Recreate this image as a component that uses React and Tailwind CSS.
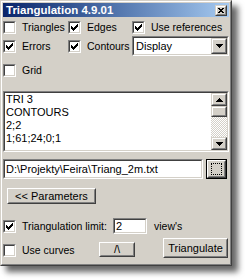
import React from "react";

const sunkO = "border border-t-[#808080] border-l-[#808080] border-b-white border-r-white";
const sunkI = "border border-t-[#404040] border-l-[#404040] border-b-[#d4d0c8] border-r-[#d4d0c8]";
const raisO = "border border-t-white border-l-white border-b-[#404040] border-r-[#404040]";
const raisI = "border border-t-[#d4d0c8] border-l-[#d4d0c8] border-b-[#808080] border-r-[#808080]";
const frameO = "border border-t-[#d4d0c8] border-l-[#d4d0c8] border-b-[#404040] border-r-[#404040]";
const frameI = "border border-t-white border-l-white border-b-[#808080] border-r-[#808080]";

function CheckMark() {
  const rects = [
    [6, 0, 1], [5, 1, 2], [0, 2, 1], [4, 2, 3], [0, 3, 2], [3, 3, 3], [0, 4, 5], [1, 5, 3], [2, 6, 1],
  ];
  return (
    <svg width="7" height="7" viewBox="0 0 7 7" shapeRendering="crispEdges">
      {rects.map(([x, y, w], i) => (
        <rect key={i} x={x} y={y} width={w} height="1" fill="#000" />
      ))}
    </svg>
  );
}

function Check({ checked }) {
  return (
    <div className={`w-[13px] h-[13px] shrink-0 ${sunkO}`}>
      <div className={`w-full h-full bg-white flex items-center justify-center ${sunkI}`}>
        {checked && <CheckMark />}
      </div>
    </div>
  );
}

function CheckLabel({ checked, label, className = "" }) {
  return (
    <div className={`flex items-center ${className}`}>
      <Check checked={checked} />
      <span className="ml-[6px] whitespace-nowrap text-[10.5px]">{label}</span>
    </div>
  );
}

function Tri({ up }) {
  return (
    <svg width="7" height="4" viewBox="0 0 7 4" shapeRendering="crispEdges">
      {up ? (
        <>
          <rect x="3" y="0" width="1" height="1" fill="#000" />
          <rect x="2" y="1" width="3" height="1" fill="#000" />
          <rect x="1" y="2" width="5" height="1" fill="#000" />
          <rect x="0" y="3" width="7" height="1" fill="#000" />
        </>
      ) : (
        <>
          <rect x="0" y="0" width="7" height="1" fill="#000" />
          <rect x="1" y="1" width="5" height="1" fill="#000" />
          <rect x="2" y="2" width="3" height="1" fill="#000" />
          <rect x="3" y="3" width="1" height="1" fill="#000" />
        </>
      )}
    </svg>
  );
}

function ArrowBtn({ up, className = "" }) {
  return (
    <div className={`${frameO} ${className}`}>
      <div className={`w-full h-full bg-[#d4d0c8] flex items-center justify-center ${frameI}`}>
        <Tri up={up} />
      </div>
    </div>
  );
}

function Button({ children, className = "" }) {
  return (
    <div className={`${raisO} ${className}`}>
      <div className={`w-full h-full bg-[#d4d0c8] flex items-center justify-center ${raisI}`}>
        {children}
      </div>
    </div>
  );
}

export default function App() {
  return (
    <div className="w-[245px] h-[280px] bg-white font-['Liberation_Sans',Arial,sans-serif] text-[11px] leading-[13px] text-black">
      <div className={`w-[232px] h-[266px] bg-[#d4d0c8] shadow-[6px_6px_6px_rgba(0,0,0,0.6)] ${frameO}`}>
        <div className={`w-full h-full p-[1px] flex flex-col ${frameI}`}>
          {/* title bar */}
          <div className="h-[14px] shrink-0 flex items-center justify-between bg-linear-to-r from-[#0a246a] to-[#a6caf0] pl-[3px] pr-[2px]">
            <span className="text-white font-bold text-[11.5px] leading-[14px] whitespace-nowrap">Triangulation 4.9.01</span>
            <div className={`w-[12px] h-[11px] ${frameO}`}>
              <div className={`w-full h-full bg-[#d4d0c8] flex items-center justify-center ${frameI}`}>
                <svg width="6" height="5" viewBox="0 0 6 5" shapeRendering="crispEdges">
                  <path d="M0 0h2v1h2v-1h2v1h-1v1h-1v1h1v1h1v1h-2v-1h-2v1h-2v-1h1v-1h1v-1h-1v-1h-1z" fill="#000" />
                </svg>
              </div>
            </div>
          </div>

          {/* row 1 */}
          <div className="flex h-[13px] mt-[4px]">
            <CheckLabel className="w-[65px]" checked={false} label="Triangles" />
            <CheckLabel className="w-[64px]" checked label="Edges" />
            <CheckLabel checked label="Use references" />
          </div>

          {/* row 2 */}
          <div className="flex h-[20px] mt-[2px] items-center">
            <CheckLabel className="w-[65px]" checked label="Errors" />
            <CheckLabel className="w-[64px]" checked label="Contours" />
            <div className={`w-[97px] h-[20px] ${sunkO}`}>
              <div className={`w-full h-full bg-white flex items-center justify-between ${sunkI}`}>
                <span className="pl-[2px]">Display</span>
                <ArrowBtn className="w-[16px] h-[16px]" />
              </div>
            </div>
          </div>

          {/* row 3 */}
          <div className="flex h-[13px] mt-[8px]">
            <CheckLabel checked={false} label="Grid" />
          </div>

          {/* text area */}
          <div className={`mt-[14px] w-[226px] h-[61px] ${sunkO}`}>
            <div className={`w-full h-full bg-white flex ${sunkI}`}>
              <div className="flex-1 pl-[1px] overflow-hidden">
                <div>TRI 3</div>
                <div>CONTOURS</div>
                <div>2;2</div>
                <div>1;61;24;0;1</div>
              </div>
              <div className="w-[16px] flex flex-col">
                <ArrowBtn up className="w-[16px] h-[13px] shrink-0" />
                <div className={`w-[16px] h-[11px] shrink-0 ${frameO}`}>
                  <div className={`w-full h-full bg-[#d4d0c8] ${frameI}`} />
                </div>
                <div className="flex-1 bg-[repeating-conic-gradient(#d4d0c8_0_25%,#ffffff_0_50%)] bg-size-[2px_2px]" />
                <ArrowBtn className="w-[16px] h-[13px] shrink-0" />
              </div>
            </div>
          </div>

          {/* path row */}
          <div className="flex mt-[7px] h-[20px]">
            <div className={`w-[200px] h-[20px] ${sunkO}`}>
              <div className={`w-full h-full bg-white flex items-center pl-[1px] ${sunkI}`}>
                <span className="whitespace-nowrap">D:\Projekty\Feira\Triang_2m.txt</span>
              </div>
            </div>
            <div className="ml-[3px] w-[21px] h-[20px] border border-black">
              <div className={`w-full h-full ${raisO}`}>
                <div className={`w-full h-full bg-[#d4d0c8] flex items-center justify-center ${raisI}`}>
                  <div className="w-[11px] h-[12px] border border-dotted border-black" />
                </div>
              </div>
            </div>
          </div>

          {/* parameters */}
          <div className="flex mt-[9px]">
            <Button className="ml-[4px] w-[89px] h-[16px]">
              <span className="whitespace-nowrap">&lt;&lt; Parameters</span>
            </Button>
          </div>

          {/* limit row */}
          <div className="flex items-center mt-[14px] h-[16px]">
            <CheckLabel className="w-[110px]" checked label="Triangulation limit:" />
            <div className={`w-[34px] h-[16px] ${sunkO}`}>
              <div className={`w-full h-full bg-white flex items-center pl-[1px] ${sunkI}`}>
                <span>2</span>
              </div>
            </div>
            <span className="ml-[7px] text-[10.5px]">view's</span>
          </div>

          {/* curves row */}
          <div className="flex items-end mt-[4px] h-[20px]">
            <CheckLabel className="w-[96px] mb-[1px]" checked={false} label="Use curves" />
            <Button className="w-[36px] h-[15px] mb-[1px]">
              <span>/\</span>
            </Button>
            <Button className="ml-[28px] w-[65px] h-[20px]">
              <span>Triangulate</span>
            </Button>
          </div>
        </div>
      </div>
    </div>
  );
}
